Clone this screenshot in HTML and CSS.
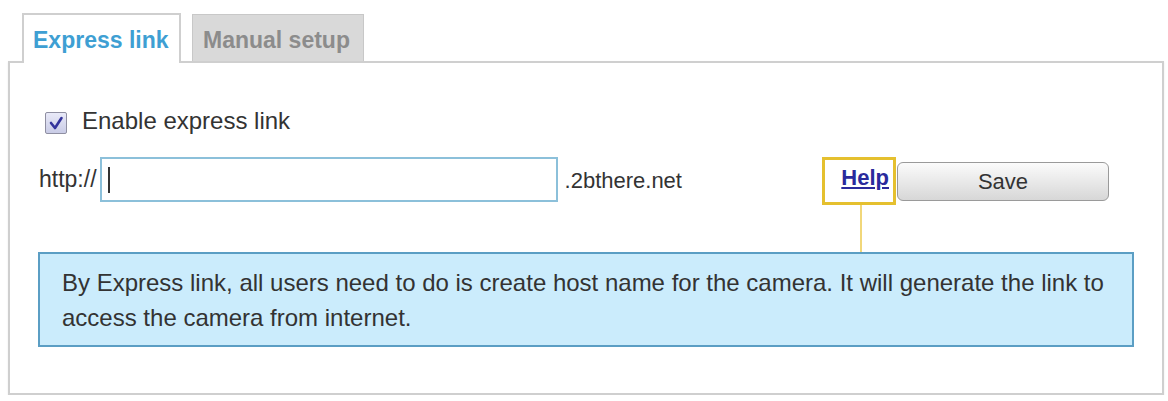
FILE: index.html
```html
<!DOCTYPE html>
<html lang="en">
<head>
<meta charset="utf-8">
<title>Express link</title>
<link rel="stylesheet" href="styles.css">
</head>
<body>
<div class="page">
  <div class="tabs">
    <div class="tab tab-active">Express link</div>
    <div class="tab tab-inactive">Manual setup</div>
  </div>
  <div class="panel">
    <div class="check-row">
      <span class="checkbox">
        <svg width="20" height="20" viewBox="0 0 20 20"><path d="M5 10 L9 15 L15.5 5" fill="none" stroke="#34349c" stroke-width="2.6" stroke-linecap="round" stroke-linejoin="round"/></svg>
      </span>
      <span class="check-label">Enable express link</span>
    </div>
    <div class="url-row">
      <span class="prefix">http://</span>
      <div class="text-field"><span class="caret"></span></div>
      <span class="suffix">.2bthere.net</span>
      <div class="actions">
        <div class="help-box"><a class="help" href="#">Help</a></div>
        <button class="save" type="button">Save</button>
      </div>
    </div>
    <div class="info">By Express link, all users need to do is create host name for the camera. It will generate the link to access the camera from internet.</div>
  </div>
</div>
</body>
</html>
```
FILE: styles.css
```css
html, body {
  margin: 0;
  padding: 0;
  background: #ffffff;
}

body {
  font-family: "Liberation Sans", Arial, sans-serif;
  color: #333333;
}

.page {
  padding-top: 13px;
}

.tabs {
  display: flex;
  align-items: flex-end;
  gap: 11px;
  margin-left: 22px;
  margin-bottom: -2px;
  position: relative;
  z-index: 1;
}

.tab {
  box-sizing: border-box;
  font-weight: bold;
  font-size: 23px;
  line-height: 30px;
  white-space: nowrap;
}

.tab-active {
  width: 159px;
  height: 50px;
  padding: 10px 0 0 9px;
  background: #ffffff;
  border: 2px solid #cfcfcf;
  border-bottom: none;
  color: #3e9fd3;
}

.tab-inactive {
  width: 172px;
  height: 47px;
  padding: 10px 0 0 10px;
  margin-bottom: 2px;
  background: #d9d9d9;
  border: 1px solid #c8c8c8;
  border-bottom: none;
  color: #8c8c8c;
}

.panel {
  margin: 0 4px 0 8px;
  border: 2px solid #cfcfcf;
  padding: 44px 28px 46px 28px;
  box-shadow: 0 1px 2px rgba(0, 0, 0, 0.08);
}

.check-row {
  display: flex;
  align-items: flex-start;
  margin-left: 7px;
  font-size: 24px;
}

.checkbox {
  box-sizing: border-box;
  width: 22px;
  height: 22px;
  margin-top: 5px;
  margin-right: 15px;
  border: 1px solid #8f8fa2;
  border-radius: 2px;
  background: linear-gradient(#e9eaf8, #c9cce6);
  display: flex;
  align-items: center;
  justify-content: center;
}

.check-label {
  color: #333333;
}

.url-row {
  display: flex;
  align-items: flex-start;
  margin-top: 22px;
  margin-left: 1px;
}

.prefix {
  font-size: 23px;
  margin-top: 9px;
  color: #333333;
}

.text-field {
  box-sizing: border-box;
  width: 458px;
  height: 45px;
  margin-left: 3px;
  border: 2px solid #8cc0da;
  background: #ffffff;
  display: flex;
  align-items: center;
}

.caret {
  width: 2px;
  height: 26px;
  margin-left: 6px;
  background: #333333;
}

.suffix {
  font-size: 22px;
  margin-top: 11px;
  margin-left: 7px;
  color: #333333;
}

.actions {
  display: flex;
  align-items: flex-start;
  margin-left: auto;
  margin-right: 25px;
}

.help-box {
  position: relative;
  box-sizing: border-box;
  width: 74px;
  height: 48px;
  border: 3px solid #e5c02f;
  padding: 5px 4px 0 0;
  display: flex;
  justify-content: flex-end;
  align-items: flex-start;
}

.help-box::after {
  content: "";
  position: absolute;
  left: 35px;
  top: calc(100% + 3px);
  width: 2px;
  height: 47px;
  background: #f1d77a;
}

.help {
  font-size: 22px;
  line-height: 26px;
  font-weight: bold;
  color: #2a2a9c;
  text-decoration: underline;
}

.save {
  box-sizing: border-box;
  width: 212px;
  height: 39px;
  margin-top: 5px;
  margin-left: 1px;
  border: 1px solid #9a9a9a;
  border-radius: 6px;
  background: linear-gradient(#fbfbfb, #e9e9e9 50%, #d7d7d7);
  font-family: "Liberation Sans", Arial, sans-serif;
  font-size: 22px;
  color: #333333;
  padding: 0;
}

.info {
  margin-top: 47px;
  border: 2px solid #5b9ec4;
  background: #cbecfc;
  padding: 11px 20px 10px 22px;
  font-size: 24px;
  line-height: 35px;
  color: #333333;
}
```
